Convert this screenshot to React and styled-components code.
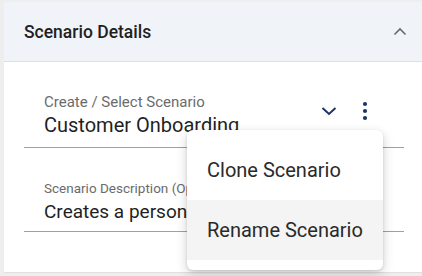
import React from 'react';
import styled, { createGlobalStyle } from 'styled-components';

const GlobalStyle = createGlobalStyle`
  html, body {
    margin: 0;
    padding: 0;
    background: #eeeeee;
    font-family: Roboto, "Liberation Sans", sans-serif;
  }
`;

const Page = styled.div`
  width: 422px;
  height: 276px;
  padding: 2px 0 0 4px;
  box-sizing: border-box;
  overflow: hidden;
`;

const Card = styled.section`
  position: relative;
  background: #ffffff;
  height: 270px;
  border-bottom: 1px solid #e0e0e0;
`;

const Header = styled.div`
  display: flex;
  align-items: center;
  justify-content: space-between;
  height: 59px;
  padding: 0 14px 0 20px;
  background: #f0f3f8;
  border-bottom: 1px solid #dcdfe4;
`;

const Title = styled.h2`
  margin: 0;
  font-size: 17.5px;
  font-weight: 500;
  color: #1f1f1f;
`;

const Body = styled.div`
  display: flex;
  flex-direction: column;
  padding: 31px 18px 0 20px;
`;

const Field = styled.div`
  display: flex;
  align-items: center;
  border-bottom: 1px solid #a0a0a0;
  padding: 0 0 ${p => p.$pb}px 20px;
  margin-top: ${p => p.$mt}px;
`;

const FieldText = styled.div`
  flex: 1;
  min-width: 0;
  display: flex;
  flex-direction: column;
  gap: ${p => p.$gap}px;
`;

const Label = styled.span`
  font-size: ${p => p.$size}px;
  color: #6b6b6b;
  white-space: nowrap;
  overflow: hidden;
`;

const Value = styled.span`
  font-size: ${p => p.$size}px;
  color: #1f1f1f;
  white-space: nowrap;
  overflow: hidden;
  line-height: 1.1;
`;

const Actions = styled.div`
  display: flex;
  align-items: center;
  gap: 20px;
  margin: 0 31px 8px 0;
  color: #1b3664;
`;

const IconButton = styled.button`
  display: flex;
  align-items: center;
  justify-content: center;
  background: none;
  border: 0;
  padding: 0;
  width: ${p => p.$w}px;
  height: 24px;
  color: inherit;
`;

const Menu = styled.ul`
  position: absolute;
  left: 183px;
  top: 128px;
  width: 196px;
  margin: 0;
  padding: 10px 0;
  list-style: none;
  background: #ffffff;
  border-radius: 6px;
  box-shadow: 0 4px 12px rgba(0, 0, 0, 0.18), 0 1px 3px rgba(0, 0, 0, 0.12);
`;

const MenuItem = styled.li`
  display: flex;
  align-items: center;
  height: 60px;
  padding: 0 20px;
  font-size: 20px;
  color: #2a2a2a;
  background: ${p => (p.$active ? '#f4f4f4' : 'transparent')};
`;

const ChevronUp = () => (
  <svg width="16" height="16" viewBox="0 0 16 16" fill="none">
    <path d="M2.5 10.5 L8 5 L13.5 10.5" stroke="#6a6a6a" strokeWidth="1.6" />
  </svg>
);

const ChevronDown = () => (
  <svg width="16" height="16" viewBox="0 0 16 16" fill="none">
    <path d="M1.5 5 L8 11 L14.5 5" stroke="currentColor" strokeWidth="2" />
  </svg>
);

const Dots = () => (
  <svg width="6" height="20" viewBox="0 0 6 20" fill="currentColor">
    <circle cx="3" cy="3" r="2.1" />
    <circle cx="3" cy="10" r="2.1" />
    <circle cx="3" cy="17" r="2.1" />
  </svg>
);

export default function App() {
  return (
    <>
      <GlobalStyle />
      <Page>
        <Card>
          <Header>
            <Title>Scenario Details</Title>
            <ChevronUp />
          </Header>
          <Body>
            <Field $pb={11} $mt={0}>
              <FieldText $gap={3}>
                <Label $size={15}>Create / Select Scenario</Label>
                <Value $size={20}>Customer Onboarding</Value>
              </FieldText>
              <Actions>
                <IconButton $w={16}>
                  <ChevronDown />
                </IconButton>
                <IconButton $w={16}>
                  <Dots />
                </IconButton>
              </Actions>
            </Field>
            <Field $pb={8} $mt={32}>
              <FieldText $gap={6}>
                <Label $size={13.5}>Scenario Description (Optional)</Label>
                <Value $size={19}>Creates a person and account</Value>
              </FieldText>
            </Field>
          </Body>
          <Menu>
            <MenuItem>Clone Scenario</MenuItem>
            <MenuItem $active>Rename Scenario</MenuItem>
          </Menu>
        </Card>
      </Page>
    </>
  );
}
